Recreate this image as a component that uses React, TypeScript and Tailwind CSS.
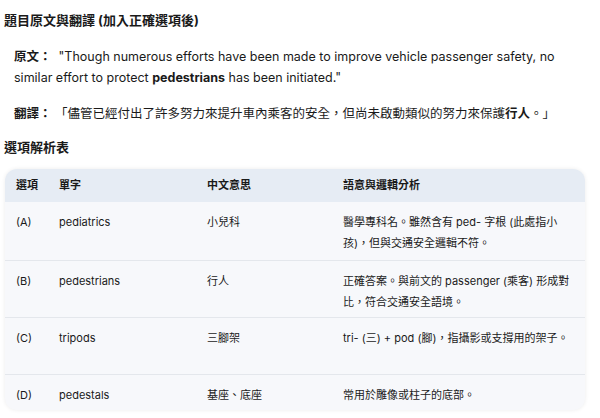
const rows = [
  {
    opt: "(A)",
    word: "pediatrics",
    zh: "小兒科",
    note: ["醫學專科名。雖然含有 ped- 字根 (此處指小", "孩)，但與交通安全邏輯不符。"],
    h: "h-[58px]",
  },
  {
    opt: "(B)",
    word: "pedestrians",
    zh: "行人",
    note: ["正確答案。與前文的 passenger (乘客) 形成對", "比，符合交通安全語境。"],
    h: "h-[57px]",
  },
  {
    opt: "(C)",
    word: "tripods",
    zh: "三腳架",
    note: ["tri- (三) + pod (腳)，指攝影或支撐用的架子。"],
    h: "h-[57px]",
  },
  {
    opt: "(D)",
    word: "pedestals",
    zh: "基座、底座",
    note: ["常用於雕像或柱子的底部。"],
    h: "h-[36px]",
  },
]

const App = () => {
  return (
    <div className="w-[600px] h-[418px] overflow-hidden bg-white text-[#1a1a1a] font-['Inter','Noto_Sans_CJK_TC',sans-serif]">
      <div className="pl-[4px] pr-[8px] pt-[10px]">
        <h2 className="text-[13px] font-bold leading-[21px]">題目原文與翻譯 (加入正確選項後)</h2>

        <p className="mt-[15px] pl-[10px] text-[12.5px] leading-[21px]">
          <span className="font-bold">原文：</span>&nbsp; "Though numerous efforts have been made to improve vehicle passenger safety, no
          <br />
          similar effort to protect <span className="font-bold">pedestrians</span> has been initiated."
        </p>

        <p className="mt-[15px] pl-[10px] text-[12.5px] leading-[21px] whitespace-nowrap">
          <span className="font-bold">翻譯：</span> 「儘管已經付出了許多努力來提升車內乘客的安全，但尚未啟動類似的努力來保護
          <span className="font-bold">行人</span>。」
        </p>

        <h3 className="mt-[13px] text-[13px] font-bold leading-[21px]">選項解析表</h3>

        <div className="mt-[11px] ml-[1px] w-[580px] rounded-[12px] overflow-hidden bg-[#f7f8fb] shadow-[0_0_4px_rgba(0,0,0,0.08)] text-[11px] leading-[21px]">
          <div className="grid grid-cols-[43px_148px_136px_1fr] h-[33px] items-center bg-[#e6ecf4] font-semibold">
            <div className="pl-[11px]">選項</div>
            <div className="pl-[11px]">單字</div>
            <div className="pl-[11px]">中文意思</div>
            <div className="pl-[11px]">語意與邏輯分析</div>
          </div>
          {rows.map((r, i) => (
            <div
              key={i}
              className={`grid grid-cols-[43px_148px_136px_1fr] pt-[10px] ${r.h} ${i > 0 ? "border-t border-[#e4e7ec]" : ""}`}
            >
              <div className="pl-[11px]">{r.opt}</div>
              <div className="pl-[11px]">{r.word}</div>
              <div className="pl-[11px]">{r.zh}</div>
              <div className="pl-[11px] pr-[8px]">
                {r.note.map((l, j) => (
                  <div key={j} className="whitespace-nowrap">{l}</div>
                ))}
              </div>
            </div>
          ))}
        </div>
      </div>
    </div>
  )
}

export default App
